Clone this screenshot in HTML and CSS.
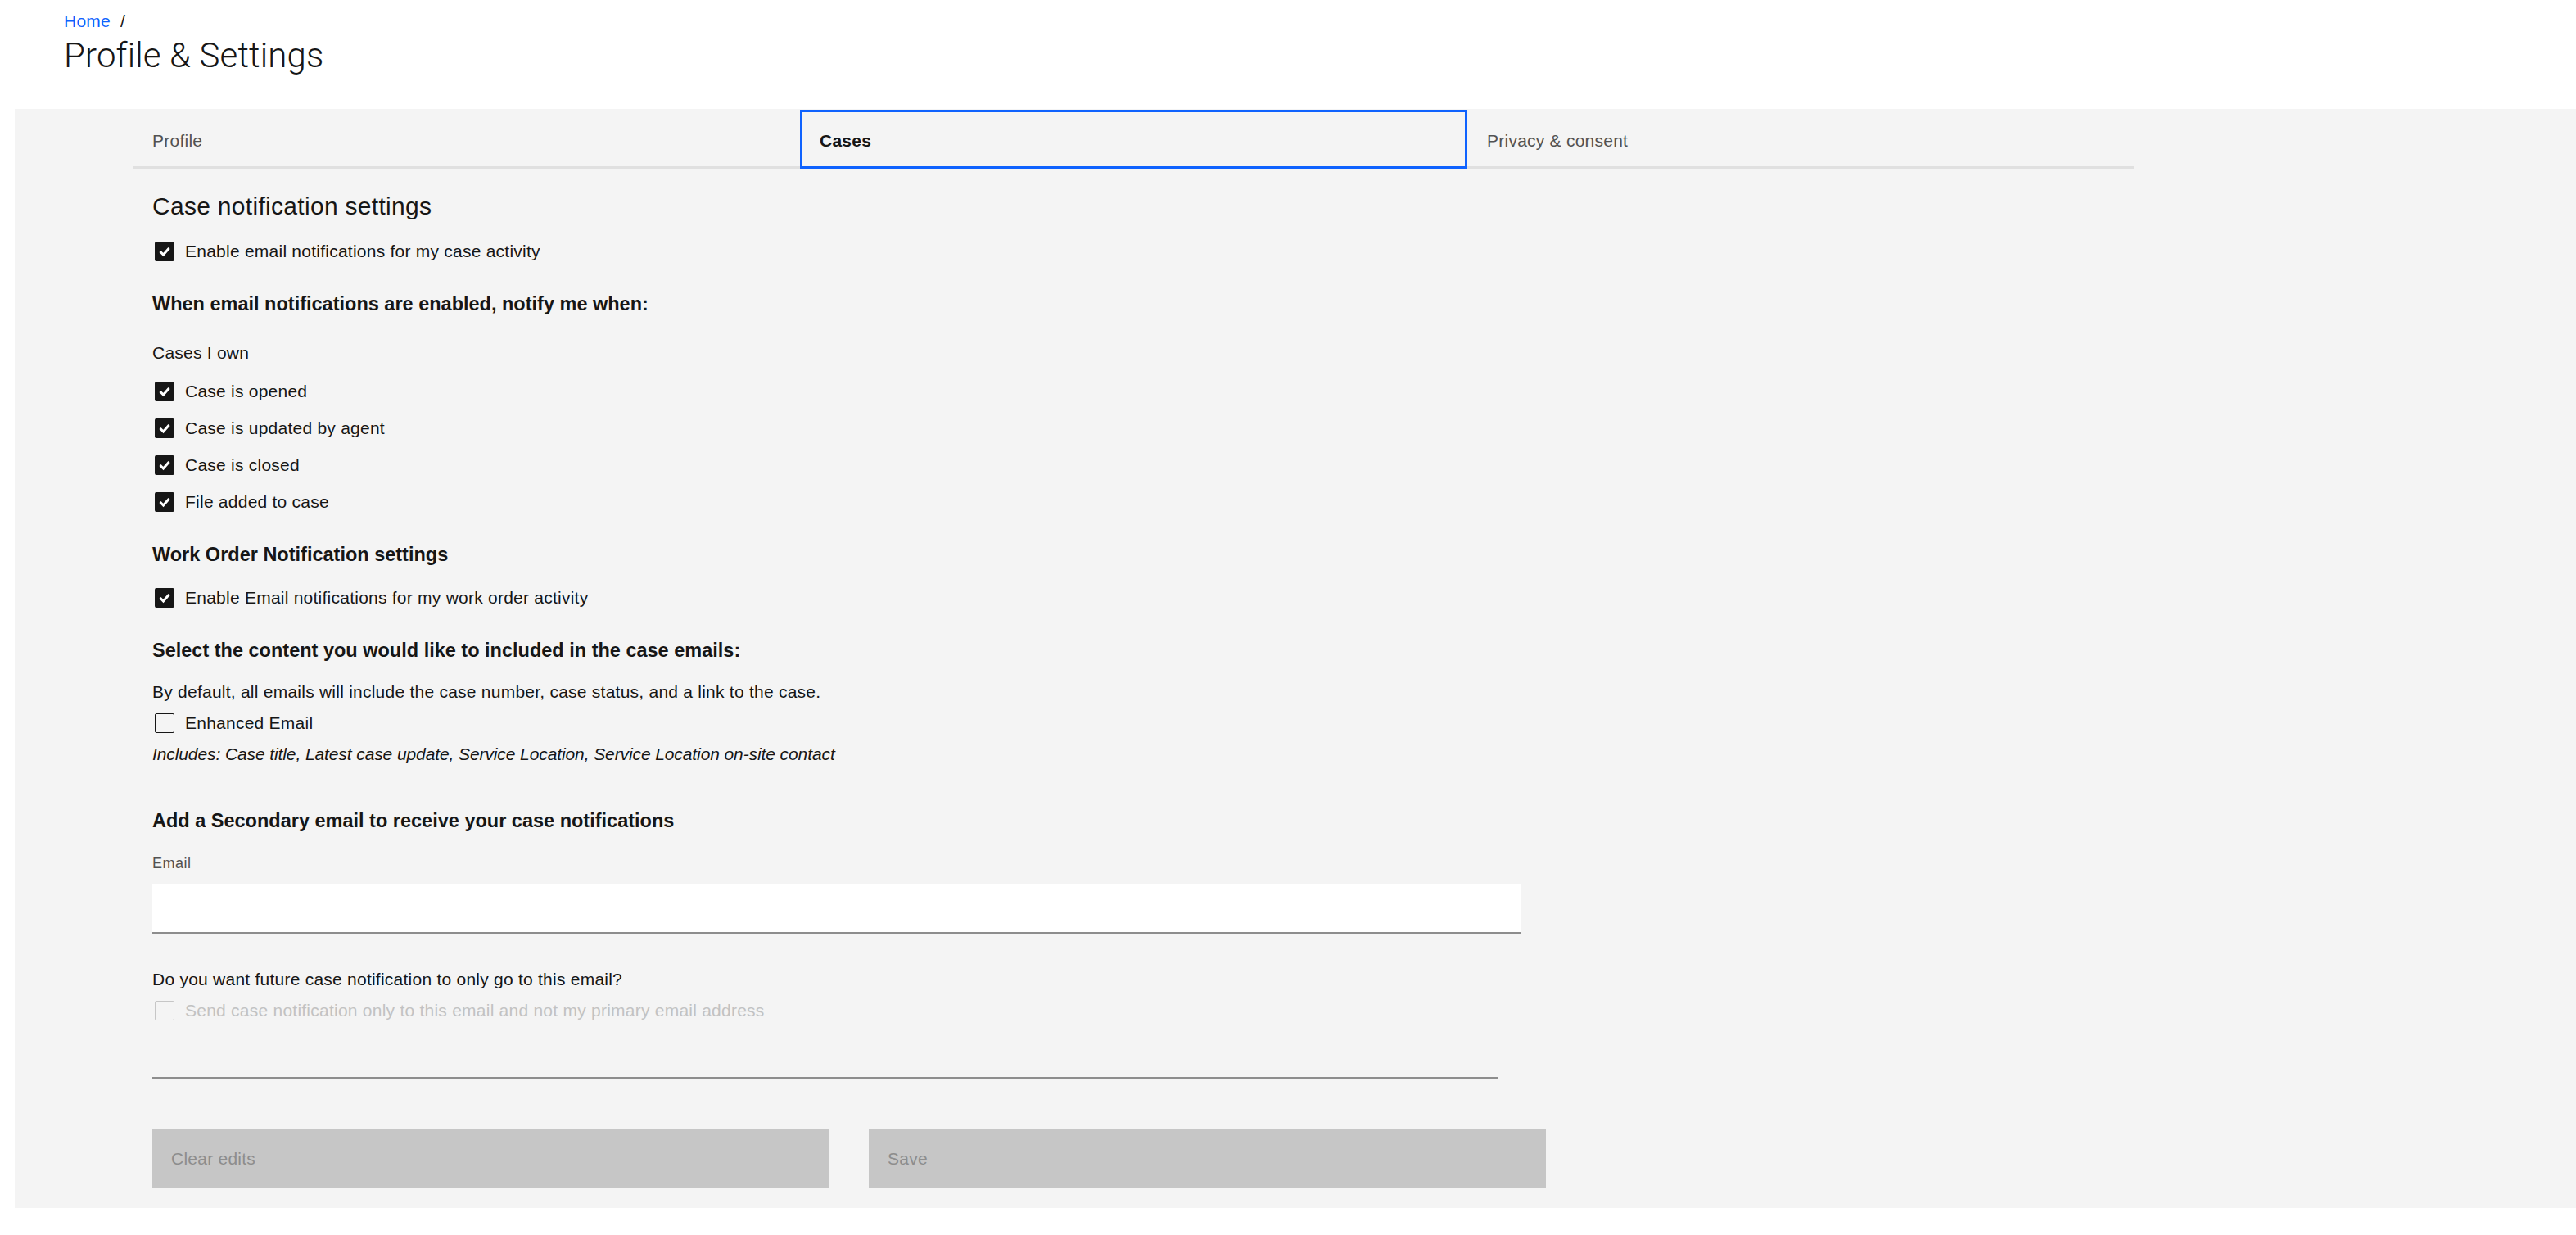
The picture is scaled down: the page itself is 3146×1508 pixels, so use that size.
FILE: index.html
```html
<!DOCTYPE html>
<html lang="en">
<head>
<meta charset="utf-8">
<title>Profile &amp; Settings</title>
<link rel="stylesheet" href="styles.css">
</head>
<body>
<header class="header">
  <nav class="breadcrumb"><a href="#">Home</a><span class="sep">/</span></nav>
  <h1 class="title">Profile &amp; Settings</h1>
</header>
<main class="panel">
  <div class="tabs">
    <div class="tab">Profile</div>
    <div class="tab selected">Cases</div>
    <div class="tab last">Privacy &amp; consent</div>
  </div>
  <div class="content">
    <h3 class="h-section">Case notification settings</h3>
    <label class="cb mt22"><span class="box on"><svg viewBox="0 0 24 24" width="24" height="24"><polyline points="6.5,12 10.5,16 17.5,8" /></svg></span><span>Enable email notifications for my case activity</span></label>

    <h4 class="h-sub mt36">When email notifications are enabled, notify me when:</h4>
    <p class="txt mt29">Cases I own</p>
    <div class="cb-list mt22">
      <label class="cb"><span class="box on"><svg viewBox="0 0 24 24" width="24" height="24"><polyline points="6.5,12 10.5,16 17.5,8" /></svg></span><span>Case is opened</span></label>
      <label class="cb"><span class="box on"><svg viewBox="0 0 24 24" width="24" height="24"><polyline points="6.5,12 10.5,16 17.5,8" /></svg></span><span>Case is updated by agent</span></label>
      <label class="cb"><span class="box on"><svg viewBox="0 0 24 24" width="24" height="24"><polyline points="6.5,12 10.5,16 17.5,8" /></svg></span><span>Case is closed</span></label>
      <label class="cb"><span class="box on"><svg viewBox="0 0 24 24" width="24" height="24"><polyline points="6.5,12 10.5,16 17.5,8" /></svg></span><span>File added to case</span></label>
    </div>

    <h4 class="h-sub mt36">Work Order Notification settings</h4>
    <label class="cb mt24"><span class="box on"><svg viewBox="0 0 24 24" width="24" height="24"><polyline points="6.5,12 10.5,16 17.5,8" /></svg></span><span>Enable Email notifications for my work order activity</span></label>

    <h4 class="h-sub mt36">Select the content you would like to included in the case emails:</h4>
    <p class="txt mt20">By default, all emails will include the case number, case status, and a link to the case.</p>
    <label class="cb mt13"><span class="box"></span><span>Enhanced Email</span></label>
    <p class="txt italic mt12">Includes: Case title, Latest case update, Service Location, Service Location on-site contact</p>

    <h4 class="h-sub mt52">Add a Secondary email to receive your case notifications</h4>
    <label class="field-label mt23" for="email">Email</label>
    <input class="input mt13" id="email" type="email">

    <p class="txt mt42">Do you want future case notification to only go to this email?</p>
    <label class="cb disabled mt13"><span class="box"></span><span>Send case notification only to this email and not my primary email address</span></label>

    <div class="divider mt69"></div>

    <div class="actions mt62">
      <button class="btn" disabled>Clear edits</button>
      <button class="btn" disabled>Save</button>
    </div>
  </div>
</main>
</body>
</html>
```
FILE: styles.css
```css
* { box-sizing: border-box; }

body {
  margin: 0;
  background: #ffffff;
  color: #161616;
  font-family: "Liberation Sans", Arial, sans-serif;
}

.header {
  padding: 12px 0 0 78px;
  margin-bottom: 38px;
}

.breadcrumb {
  display: flex;
  font-size: 21px;
  line-height: 27px;
  letter-spacing: 0.24px;
}
.breadcrumb a { color: #0f62fe; text-decoration: none; }
.breadcrumb .sep { margin-left: 12px; color: #161616; }

.title {
  margin: 2px 0 0;
  font-family: Roboto, "Liberation Sans", sans-serif;
  font-weight: 300;
  font-size: 42px;
  line-height: 54px;
  letter-spacing: 0.15px;
}

.panel {
  margin-left: 18px;
  background: #f4f4f4;
  padding: 1px 0 24px 144px;
}

.tabs {
  display: flex;
  width: 2444px;
}

.tab {
  flex: 0 0 815px;
  height: 72px;
  display: flex;
  align-items: center;
  padding: 7px 0 0 24px;
  border-bottom: 3px solid #e0e0e0;
  font-size: 21px;
  letter-spacing: 0.24px;
  color: #525252;
}
.tab.last { flex-basis: 814px; }
.tab.selected {
  border: 3px solid #0f62fe;
  padding: 4px 0 0 21px;
  color: #161616;
  font-weight: 700;
}

.content {
  padding-left: 24px;
}

.h-section {
  margin: 25px 0 0;
  font-weight: 400;
  font-size: 30px;
  line-height: 42px;
  letter-spacing: 0.3px;
}

.h-sub {
  margin: 0;
  font-weight: 700;
  font-size: 23.5px;
  line-height: 33px;
}

.txt {
  margin: 0;
  font-size: 21px;
  line-height: 27px;
  letter-spacing: 0.24px;
}
.txt.italic { font-style: italic; letter-spacing: -0.1px; }

.cb {
  display: flex;
  align-items: center;
  gap: 13px;
  height: 24px;
  padding-left: 3px;
  font-size: 21px;
  line-height: 24px;
  letter-spacing: 0.24px;
  color: #161616;
}

.box {
  flex: 0 0 24px;
  width: 24px;
  height: 24px;
  border: 1.5px solid #161616;
  border-radius: 2px;
  display: flex;
}
.box.on {
  background: #161616;
  border: none;
}
.box svg polyline {
  fill: none;
  stroke: #ffffff;
  stroke-width: 3;
  stroke-linecap: butt;
  stroke-linejoin: miter;
}

.cb.disabled { color: #c2c2c2; }
.cb.disabled .box { border-color: #c6c6c6; }

.cb-list {
  display: flex;
  flex-direction: column;
  gap: 21px;
}

.field-label {
  display: block;
  font-size: 18px;
  line-height: 24px;
  letter-spacing: 0.48px;
  color: #525252;
}

.input {
  display: block;
  width: 1671px;
  height: 61px;
  border: none;
  border-bottom: 2px solid #8d8d8d;
  background: #ffffff;
  outline: none;
  padding: 0 24px;
  font-family: inherit;
  font-size: 21px;
}

.divider {
  width: 1643px;
  height: 2px;
  background: #8d8d8d;
}

.actions {
  display: flex;
  gap: 48px;
}

.btn {
  width: 827px;
  height: 72px;
  border: none;
  background: #c6c6c6;
  color: #8d8d8d;
  font-family: inherit;
  font-size: 21px;
  letter-spacing: 0.24px;
  text-align: left;
  padding: 0 0 0 23px;
}

.mt12 { margin-top: 12px; }
.mt13 { margin-top: 13px; }
.mt20 { margin-top: 20px; }
.mt22 { margin-top: 22px; }
.mt23 { margin-top: 23px; }
.mt24 { margin-top: 24px; }
.mt29 { margin-top: 29px; }
.mt36 { margin-top: 36px; }
.mt42 { margin-top: 42px; }
.mt52 { margin-top: 52px; }
.mt62 { margin-top: 62px; }
.mt69 { margin-top: 69px; }
```
